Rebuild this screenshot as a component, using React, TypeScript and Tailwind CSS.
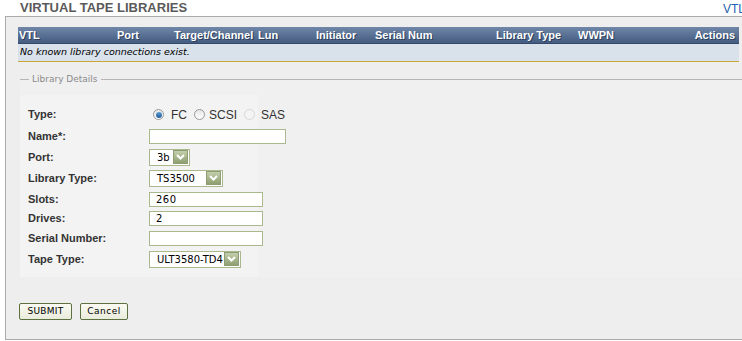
import React from "react";

const Arrow = () => (
  <div className="ml-auto mr-[1px] flex h-[14px] w-[15px] shrink-0 items-center justify-center border border-[#8d9c73] bg-gradient-to-b from-[#c3cfab] to-[#8f9f72]">
    <svg width="9" height="6" viewBox="0 0 9 6">
      <path d="M1 1 L4.5 4.5 L8 1" fill="none" stroke="#ffffff" strokeWidth="2" />
    </svg>
  </div>
);

const mono = { fontFamily: '"DejaVu Sans", sans-serif' };

const Select = ({ w, value }: { w: string; value: string }) => (
  <div className={`flex h-[17px] shrink-0 items-center border border-[#a9b98d] bg-white pl-[7px] ${w}`}>
    <span className="text-[10px] text-black" style={mono}>{value}</span>
    <Arrow />
  </div>
);

const Input = ({ w, value }: { w: string; value?: string }) => (
  <div className={`flex h-[15px] shrink-0 items-center border border-[#a9b98d] bg-white pl-[6px] ${w}`}>
    <span className="text-[10px] tracking-[0.5px] text-black" style={mono}>{value}</span>
  </div>
);

const Radio = ({ checked, disabled }: { checked?: boolean; disabled?: boolean }) => (
  <div
    className={`flex h-[11px] w-[11px] shrink-0 items-center justify-center rounded-full border ${
      disabled ? "border-[#d8d8d8] bg-[#f4f4f4]" : "border-[#9a9a9a] bg-gradient-to-b from-[#e6e6e6] to-[#ffffff]"
    }`}
  >
    {checked && <div className="h-[6px] w-[6px] rounded-full bg-gradient-to-b from-[#5fa0d8] to-[#1b5a96]" />}
  </div>
);

const Row = ({ label, h, children }: { label: string; h: string; children: React.ReactNode }) => (
  <div className={`flex items-center ${h}`}>
    <div className="w-[121px] shrink-0 whitespace-nowrap text-[11px] font-bold text-[#333]">{label}</div>
    {children}
  </div>
);

export default function App() {
  const headers: [string, string][] = [
    ["VTL", "w-[98px]"],
    ["Port", "w-[57px]"],
    ["Target/Channel", "w-[84px]"],
    ["Lun", "w-[58px]"],
    ["Initiator", "w-[59px]"],
    ["Serial Num", "w-[121px]"],
    ["Library Type", "w-[82px]"],
    ["WWPN", "w-[60px]"],
  ];
  return (
    <div className="h-[341px] w-[742px] overflow-hidden bg-white" style={{ fontFamily: '"Liberation Sans", Arial, sans-serif' }}>
      <div className="relative h-[16px]">
        <div className="absolute left-[20px] top-[0px] text-[13px] font-bold leading-[16px] text-[#5a5a5a]">VIRTUAL TAPE LIBRARIES</div>
        <div className="absolute left-[723px] top-[1px] text-[12px] leading-[16px] text-[#1f5fb0]">VTL</div>
      </div>
      <div className="ml-[5px] h-[324px] border-b border-l border-t border-[#ababab] bg-[#eeeeee] pt-[10px]">
        <div className="ml-[12px] w-[721px]">
          <div className="flex h-[17px] items-center border-b border-[#34496a] bg-gradient-to-b from-[#7087a8] to-[#445c80] pl-[1px] pr-[4px] text-[11px] font-bold text-white [text-shadow:1px_1px_0_#2c3f5c]">
            {headers.map(([t, w]) => (
              <div key={t} className={`shrink-0 ${w}`}>{t}</div>
            ))}
            <div className="ml-auto">Actions</div>
          </div>
          <div className="flex h-[18px] items-center border-b border-[#c9a53a] bg-[#d9e2eb] pl-[2px]">
            <span className="text-[9.5px] italic text-black" style={mono}>No known library connections exist.</span>
          </div>
        </div>
        <div className="ml-[14px] mt-[12px] flex h-[10px] items-center">
          <div className="h-px w-[9px] bg-[#b5b5b5]" />
          <span className="px-[3px] text-[9px] leading-[10px] text-[#8a8a8a]" style={mono}>Library Details</span>
          <div className="h-px flex-1 bg-[#b5b5b5]" />
        </div>
        <div className="ml-[14px] mt-[-5px] bg-[#f0f0f0] pt-[16px]">
          <div className="w-[238px] bg-[#f3f3f3] pb-[8px] pl-[8px] pt-[9px]">
            <Row label="Type:" h="h-[21px]">
              <div className="flex items-center text-[12px] text-[#333]">
                <div className="ml-[4px]"><Radio checked /></div>
                <span className="ml-[7px]">FC</span>
                <div className="ml-[7px]"><Radio /></div>
                <span className="ml-[4px]">SCSI</span>
                <div className="ml-[7px]"><Radio disabled /></div>
                <span className="ml-[6px]">SAS</span>
              </div>
            </Row>
            <Row label="Name*:" h="h-[22px]">
              <Input w="w-[137px]" />
            </Row>
            <Row label="Port:" h="h-[20px]">
              <Select w="w-[41px]" value="3b" />
            </Row>
            <Row label="Library Type:" h="h-[22px]">
              <Select w="w-[74px]" value="TS3500" />
            </Row>
            <Row label="Slots:" h="h-[20px]">
              <Input w="w-[114px]" value="260" />
            </Row>
            <Row label="Drives:" h="h-[18px]">
              <Input w="w-[114px]" value="2" />
            </Row>
            <Row label="Serial Number:" h="h-[22px]">
              <Input w="w-[114px]" />
            </Row>
            <Row label="Tape Type:" h="h-[20px]">
              <Select w="w-[92px]" value="ULT3580-TD4" />
            </Row>
          </div>
        </div>
        <div className="ml-[13px] mt-[26px] flex gap-[8px]">
          <button className="flex h-[17px] w-[53px] items-center justify-center rounded-[2px] border border-[#5c7040] bg-gradient-to-b from-[#fbfbf3] to-[#e9ebdc] text-[9px] tracking-[0.3px] text-black" style={mono}>SUBMIT</button>
          <button className="flex h-[17px] w-[48px] items-center justify-center rounded-[2px] border border-[#5c7040] bg-gradient-to-b from-[#fbfbf3] to-[#e9ebdc] text-[9px] tracking-[0.5px] text-black" style={mono}>Cancel</button>
        </div>
      </div>
    </div>
  );
}
